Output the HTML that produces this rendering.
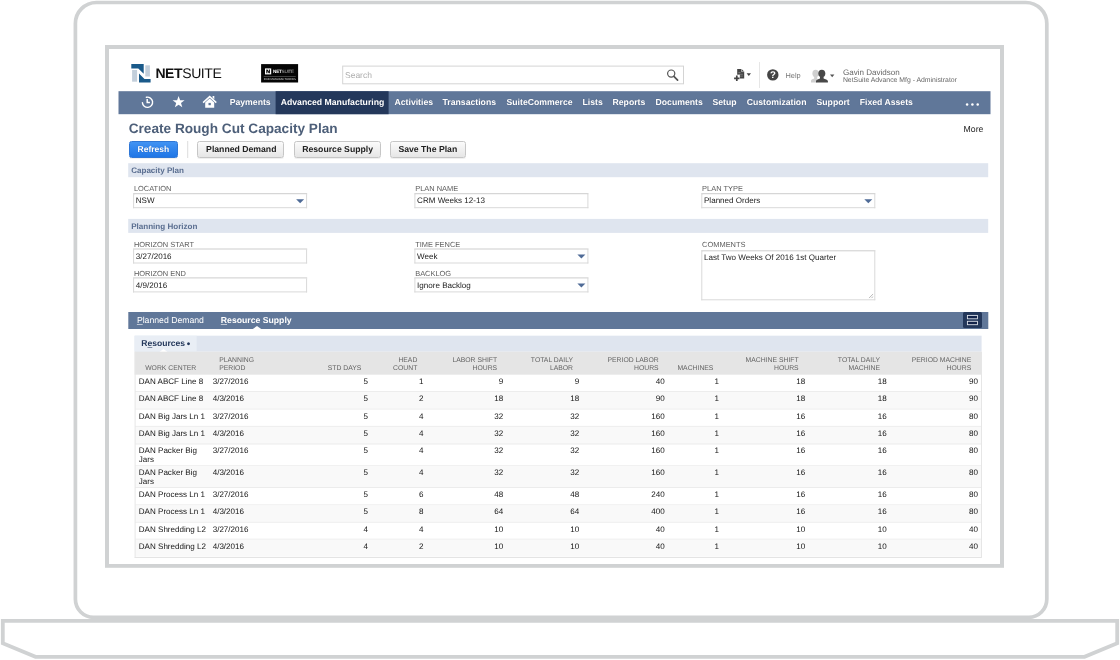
<!DOCTYPE html>
<html lang="en">
<head>
<meta charset="utf-8">
<title>Create Rough Cut Capacity Plan - NetSuite</title>
<style>
*{box-sizing:border-box;margin:0;padding:0}
html,body{width:1120px;height:660px;overflow:hidden;background:#fff}
body{position:relative;font-family:"Liberation Sans",Arial,sans-serif;color:#222;-webkit-font-smoothing:antialiased;text-rendering:geometricPrecision}
.a{position:absolute;white-space:nowrap}
#frame{position:absolute;left:0;top:0;width:1120px;height:660px}
#screen{position:absolute;left:109px;top:49px;width:891px;height:515px;background:#fff;overflow:hidden}
#s{position:absolute;left:-109px;top:-49px;width:1120px;height:660px;will-change:transform}
.btn{top:141px;height:17px;border:1px solid #c6c6c6;border-radius:2.5px;background:linear-gradient(#fbfbfb,#e6e6e6);box-shadow:0 1px 0 rgba(0,0,0,.06)}
.bp{background:linear-gradient(#4193f3,#1f76e6);border-color:#2f77d6}
.fd{border:1px solid #d9d9d9;border-top-color:#cdcdcd;background:#fff}
.arr{position:absolute;right:2.8px;top:4.9px;width:0;height:0;border-left:4.1px solid transparent;border-right:4.1px solid transparent;border-top:4.8px solid #4f6b97}
u{text-decoration-thickness:1px;text-underline-offset:1px;text-decoration-color:rgba(255,255,255,.6)}
u.d{text-decoration-color:rgba(36,56,91,.55)}
</style>
</head>
<body>
<svg id="frame" viewBox="0 0 1120 660">
  <path d="M96.4 2.5 H1025.8 A21 21 0 0 1 1046.8 23.5 V599.3 A18 18 0 0 1 1028.8 617.3 H93.4 A18 18 0 0 1 75.4 599.3 V23.5 A21 21 0 0 1 96.4 2.5 Z" fill="#fff" stroke="#d0d2d3" stroke-width="3.7"/>
  <path d="M2.8 620.9 H1117.2 V643.3 L1084.5 656.8 H35.5 L2.8 643.3 Z" fill="#fff" stroke="#d0d2d3" stroke-width="3.8" stroke-linejoin="miter"/>
  <rect x="107" y="47" width="895" height="518.8" fill="none" stroke="#d0d2d3" stroke-width="4"/>
</svg>
<div id="screen"><div id="s">
<!-- CONTENT -->
<!-- ===== header ===== -->
<svg class="a" style="left:0;top:0" width="1120" height="120" viewBox="0 0 1120 120">
  <!-- netsuite mark -->
  <polygon points="131.3,64.1 143.7,64.1 143.7,73.8 138.3,68.5 131.3,68.5" fill="#1a5a8a"/>
  <polygon points="139,73.4 144.5,78.9 150.6,78.9 150.6,82.6 139,82.6" fill="#1a5a8a"/>
  <rect x="132.1" y="70" width="5" height="11.7" fill="#c3cfdb"/>
  <rect x="145.3" y="65.3" width="4.6" height="11.2" fill="#c3cfdb"/>
  <!-- black partner badge -->
  <rect x="261.1" y="64.1" width="37" height="18.4" fill="#050505"/>
  <rect x="265" y="68.4" width="6.2" height="6" fill="#fff"/>
  <path d="M266.3 69.6v3.6h1.1v-2.2l1.3 2.2h1.2v-3.6h-1.1v2.1l-1.3-2.1z" fill="#050505"/>
  <rect x="263.7" y="76.1" width="32" height="0.4" fill="#999"/>
  <!-- search box -->
  <rect x="342.7" y="66.1" width="340.8" height="17.7" fill="#fff" stroke="#d4d4d4" stroke-width="1"/>
  <circle cx="671.2" cy="73.6" r="3.6" fill="none" stroke="#555" stroke-width="1.2"/>
  <path d="M673.9 76.4 L677.6 80.1" stroke="#555" stroke-width="1.7" stroke-linecap="round"/>
  <!-- create new -->
  <path d="M737.2 69h4.3l2.7 2.6v7h-7z" fill="#444"/>
  <path d="M741.5 69v2.6h2.7" fill="none" stroke="#fff" stroke-width="0.5"/>
  <path d="M738.4 72.5h2.2M738.4 74.3h4.4M738.4 76.1h4.4" stroke="#999" stroke-width="0.6"/>
  <rect x="733.4" y="74.7" width="6.4" height="6.8" fill="#fff"/>
  <path d="M736.8 75.6v5.4M734.1 78.3h5.4" stroke="#444" stroke-width="1.7"/>
  <path d="M746.6 73.2h4.4l-2.2 2.8z" fill="#444"/>
  <rect x="759" y="62" width="1" height="26" fill="#e6e6e6"/>
  <!-- help -->
  <circle cx="772.8" cy="74.9" r="5.7" fill="#444"/>
  <!-- user -->
  <ellipse cx="815.6" cy="73.5" rx="3.2" ry="3.7" fill="#cfcfcf"/>
  <path d="M811 82.4v-1.6c0-1.2 1.8-1.7 3.2-2.2v-1.6h3v5.4z" fill="#cfcfcf"/>
  <ellipse cx="821.8" cy="73.5" rx="3.5" ry="3.8" fill="#484848"/>
  <path d="M816 82.4v-1.5c0-1.3 2.6-1.9 4-2.5v-2h3.6v2c1.4.6 4.3 1.2 4.3 2.5v1.5z" fill="#484848"/>
  <path d="M830 74.4h4.4l-2.2 2.8z" fill="#555"/>
</svg>

<div class="a" style="left:155.4px;top:65px;font-size:14px;line-height:16px;color:#111;letter-spacing:-0.4px;"><b>NET</b>SUITE</div>
<div class="a" style="left:273.1px;top:69px;font-size:4.6px;line-height:6px;color:#fff;letter-spacing:-0.24px;"><b>NET</b><span style="color:#bbb">SUITE</span></div>
<div class="a" style="left:263.8px;top:77px;font-size:2.83px;line-height:4px;color:#ddd;">FOR MANUFACTURERS</div>
<div class="a" style="left:345px;top:70px;font-size:8.5px;line-height:11px;color:#adadad;">Search</div>
<div class="a" style="left:770.1px;top:70px;font-size:9.6px;line-height:11px;font-weight:bold;color:#fff;">?</div>
<div class="a" style="left:785.5px;top:71px;font-size:7.4px;line-height:9px;color:#777;">Help</div>
<div class="a" style="left:842.9px;top:68px;font-size:8.06px;line-height:10px;color:#666;">Gavin Davidson</div>
<div class="a" style="left:842.9px;top:77px;font-size:6.86px;line-height:8px;color:#666;">NetSuite Advance Mfg - Administrator</div>
<!-- ===== nav ===== -->
<div class="a" style="left:118px;top:91px;width:872.3px;height:22.8px;background:#607799;transform:translate(0.5px,0.2px);"></div>
<div class="a" style="left:275px;top:91px;width:113.4px;height:22.8px;background:#24385b;transform:translate(0.6px,0.2px);"></div>
<svg class="a" style="left:118px;top:91px" width="110" height="24" viewBox="118 91 110 24">
  <path d="M146.4 97.3A5.1 5.1 0 1 1 142.4 102.6" fill="none" stroke="#fff" stroke-width="1.4" stroke-linecap="round"/>
  <path d="M147.2 98.9v3.7h2.7" fill="none" stroke="#fff" stroke-width="1.5"/>
  <polygon fill="#fff" points="178.6,96 180.1,100.2 184.6,100.3 181,103 182.3,107.3 178.6,104.8 174.9,107.3 176.2,103 172.6,100.3 177.1,100.2"/>
  <path d="M203.1 102.6 209.7 96.6 216.3 102.6" fill="none" stroke="#fff" stroke-width="1.5"/>
  <path d="M212.6 96.1h1.7v3.2l-1.7-1.5z" fill="#fff"/>
  <path d="M205.2 102.6l4.5-4.1 4.5 4.1v5.2h-9z" fill="#fff"/>
  <rect x="208.5" y="102.9" width="2.3" height="2.3" fill="#607799"/>
</svg>
<div class="a" style="left:229.7px;top:96px;font-size:8.68px;line-height:12px;font-weight:bold;color:#fff;text-shadow:0 0 1px rgba(20,30,60,.35);">Payments</div>
<div class="a" style="left:280.7px;top:96px;font-size:8.68px;line-height:12px;font-weight:bold;color:#fff;text-shadow:0 0 1px rgba(20,30,60,.35);">Advanced Manufacturing</div>
<div class="a" style="left:394.5px;top:96px;font-size:8.68px;line-height:12px;font-weight:bold;color:#fff;text-shadow:0 0 1px rgba(20,30,60,.35);">Activities</div>
<div class="a" style="left:442.5px;top:96px;font-size:8.68px;line-height:12px;font-weight:bold;color:#fff;text-shadow:0 0 1px rgba(20,30,60,.35);">Transactions</div>
<div class="a" style="left:506.5px;top:96px;font-size:8.68px;line-height:12px;font-weight:bold;color:#fff;text-shadow:0 0 1px rgba(20,30,60,.35);">SuiteCommerce</div>
<div class="a" style="left:582.5px;top:96px;font-size:8.68px;line-height:12px;font-weight:bold;color:#fff;text-shadow:0 0 1px rgba(20,30,60,.35);">Lists</div>
<div class="a" style="left:612.5px;top:96px;font-size:8.68px;line-height:12px;font-weight:bold;color:#fff;text-shadow:0 0 1px rgba(20,30,60,.35);">Reports</div>
<div class="a" style="left:655.5px;top:96px;font-size:8.68px;line-height:12px;font-weight:bold;color:#fff;text-shadow:0 0 1px rgba(20,30,60,.35);">Documents</div>
<div class="a" style="left:712.5px;top:96px;font-size:8.68px;line-height:12px;font-weight:bold;color:#fff;text-shadow:0 0 1px rgba(20,30,60,.35);">Setup</div>
<div class="a" style="left:746.7px;top:96px;font-size:8.68px;line-height:12px;font-weight:bold;color:#fff;text-shadow:0 0 1px rgba(20,30,60,.35);">Customization</div>
<div class="a" style="left:816.5px;top:96px;font-size:8.68px;line-height:12px;font-weight:bold;color:#fff;text-shadow:0 0 1px rgba(20,30,60,.35);">Support</div>
<div class="a" style="left:859.7px;top:96px;font-size:8.68px;line-height:12px;font-weight:bold;color:#fff;text-shadow:0 0 1px rgba(20,30,60,.35);">Fixed Assets</div>
<svg class="a" style="left:964px;top:100px" width="18" height="8" viewBox="0 0 18 8"><circle cx="3.1" cy="4.5" r="1.25" fill="#fff"/><circle cx="8.4" cy="4.5" r="1.25" fill="#fff"/><circle cx="13.7" cy="4.5" r="1.25" fill="#fff"/></svg>
<!-- ===== title + buttons ===== -->
<div class="a" style="left:128.7px;top:120px;font-size:13.63px;line-height:17px;font-weight:bold;color:#4d5f79;">Create Rough Cut Capacity Plan</div>
<div class="a" style="left:963.6px;top:124px;font-size:8.7px;line-height:11px;color:#222;">More</div>
<div class="a btn bp" style="left:129px;width:48.5px"></div>
<div class="a" style="left:137.6px;top:144px;font-size:8.5px;line-height:11px;font-weight:bold;color:#fff;text-shadow:0 0 1px rgba(0,40,120,.5);">Refresh</div>
<div class="a" style="left:187px;top:141px;width:1px;height:17px;background:#dcdcdc;transform:translate(0.2px,0px);"></div>
<div class="a btn" style="left:197.4px;width:86.8px"></div>
<div class="a" style="left:206.1px;top:144px;font-size:8.68px;line-height:11px;font-weight:bold;color:#222;">Planned Demand</div>
<div class="a btn" style="left:293.5px;width:87.5px"></div>
<div class="a" style="left:302.2px;top:144px;font-size:8.68px;line-height:11px;font-weight:bold;color:#222;">Resource Supply</div>
<div class="a btn" style="left:390px;width:75.5px"></div>
<div class="a" style="left:398.4px;top:144px;font-size:8.68px;line-height:11px;font-weight:bold;color:#222;">Save The Plan</div>
<!-- ===== capacity plan ===== -->
<div class="a" style="left:128px;top:163px;width:859.8px;height:13.8px;background:#dfe5ef;transform:translate(0.2px,0.2px);"></div>
<div class="a" style="left:131.2px;top:166px;font-size:8.06px;line-height:10px;font-weight:bold;color:#5a6e90;">Capacity Plan</div>
<div class="a" style="left:133.9px;top:184px;font-size:7.44px;line-height:9px;color:#5c5c5c;">LOCATION</div>
<div class="a fd" style="left:133px;top:193px;width:174.4px;height:14.8px;transform:translate(0.1px,0.2px);"><i class="arr"></i></div>
<div class="a" style="left:135.8px;top:196px;font-size:8.06px;line-height:10px;color:#1a1a1a;">NSW</div>
<div class="a" style="left:415.2px;top:184px;font-size:7.44px;line-height:9px;color:#5c5c5c;">PLAN NAME</div>
<div class="a fd" style="left:414px;top:193px;width:174.4px;height:14.8px;transform:translate(0.4px,0.2px);"></div>
<div class="a" style="left:417.1px;top:196px;font-size:8.06px;line-height:10px;color:#1a1a1a;">CRM Weeks 12-13</div>
<div class="a" style="left:702.1px;top:184px;font-size:7.44px;line-height:9px;color:#5c5c5c;">PLAN TYPE</div>
<div class="a fd" style="left:701px;top:193px;width:174.4px;height:14.8px;transform:translate(0.3px,0.2px);"><i class="arr"></i></div>
<div class="a" style="left:704px;top:196px;font-size:8.06px;line-height:10px;color:#1a1a1a;">Planned Orders</div>
<!-- ===== planning horizon ===== -->
<div class="a" style="left:128px;top:218px;width:859.8px;height:13.8px;background:#dfe5ef;transform:translate(0.2px,0.9px);"></div>
<div class="a" style="left:131.2px;top:222px;font-size:8.06px;line-height:10px;font-weight:bold;color:#5a6e90;">Planning Horizon</div>
<div class="a" style="left:133.9px;top:240px;font-size:7.44px;line-height:9px;color:#5c5c5c;">HORIZON START</div>
<div class="a fd" style="left:133px;top:248px;width:174.4px;height:15.1px;transform:translate(0.1px,0.5px);"></div>
<div class="a" style="left:135.8px;top:252px;font-size:8.06px;line-height:10px;color:#1a1a1a;">3/27/2016</div>
<div class="a" style="left:133.9px;top:269px;font-size:7.44px;line-height:9px;color:#5c5c5c;">HORIZON END</div>
<div class="a fd" style="left:133px;top:277px;width:174.4px;height:15.2px;transform:translate(0.1px,0.4px);"></div>
<div class="a" style="left:135.8px;top:281px;font-size:8.06px;line-height:10px;color:#1a1a1a;">4/9/2016</div>
<div class="a" style="left:415.2px;top:240px;font-size:7.44px;line-height:9px;color:#5c5c5c;">TIME FENCE</div>
<div class="a fd" style="left:414px;top:248px;width:174.4px;height:15.1px;transform:translate(0.4px,0.5px);"><i class="arr"></i></div>
<div class="a" style="left:417.1px;top:252px;font-size:8.06px;line-height:10px;color:#1a1a1a;">Week</div>
<div class="a" style="left:415.2px;top:269px;font-size:7.44px;line-height:9px;color:#5c5c5c;">BACKLOG</div>
<div class="a fd" style="left:414px;top:277px;width:174.4px;height:15.2px;transform:translate(0.4px,0.4px);"><i class="arr"></i></div>
<div class="a" style="left:417.1px;top:281px;font-size:8.06px;line-height:10px;color:#1a1a1a;">Ignore Backlog</div>
<div class="a" style="left:702.1px;top:240px;font-size:7.44px;line-height:9px;color:#5c5c5c;">COMMENTS</div>
<div class="a fd" style="left:701px;top:250px;width:174.4px;height:50.3px;transform:translate(0.3px,0.3px);"><svg style="position:absolute;right:1px;bottom:1px" width="5" height="5" viewBox="0 0 5 5"><path d="M0.5 5 5 0.5M3 5 5 3" stroke="#888" stroke-width="0.6"/></svg></div>
<div class="a" style="left:704px;top:253px;font-size:8.06px;line-height:10px;color:#1a1a1a;">Last Two Weeks Of 2016 1st Quarter</div>
<!-- ===== tabs ===== -->
<div class="a" style="left:128px;top:312px;width:859.7px;height:16.8px;background:#607799;transform:translate(0.3px,0px);"></div>
<div class="a" style="left:136.9px;top:315px;font-size:8.68px;line-height:11px;color:#fff;"><u>P</u>lanned Demand</div>
<div class="a" style="left:220.8px;top:315px;font-size:8.68px;line-height:11px;font-weight:bold;color:#fff;"><u>R</u>esource Supply</div>
<svg class="a" style="left:252px;top:325px" width="10" height="4" viewBox="252 325 10 4"><path d="M252.8 328.9 257 326 261.2 328.9z" fill="#fff"/></svg>
<div class="a" style="left:963px;top:312px;width:19px;height:16.4px;background:#24385b;transform:translate(0px,0.1px);border-radius:1.5px;"></div>
<svg class="a" style="left:963px;top:312px" width="20" height="17" viewBox="963 312 20 17"><rect x="967.4" y="315.4" width="10.1" height="3.4" fill="#14244a" stroke="#e3e7ee" stroke-width="0.85"/><rect x="967.4" y="321.3" width="10.1" height="3.4" fill="#14244a" stroke="#e3e7ee" stroke-width="0.85"/></svg>
<!-- ===== sublist ===== -->
<div class="a" style="left:134px;top:335px;width:847.1px;height:16px;background:#dfe5ef;transform:translate(0.6px,0.7px);"></div>
<div class="a" style="left:134px;top:335px;width:61.7px;height:16px;background:#e9eef5;transform:translate(0.6px,0.7px);"></div>
<div class="a" style="left:141.3px;top:338px;font-size:8.55px;line-height:11px;font-weight:bold;color:#24385b;">R<u class="d">e</u>sources</div>
<div class="a" style="left:186.8px;top:339px;font-size:10px;line-height:11px;font-weight:bold;color:#24385b;">&bull;</div>
<svg class="a" style="left:158px;top:348px" width="12" height="5" viewBox="158 348 12 5"><path d="M159 352.3 163.5 349.1 168 352.3z" fill="#fff"/></svg>
<div class="a" style="left:134px;top:351px;width:847.1px;height:23.1px;background:#e5e5e5;transform:translate(0.6px,0.7px);"></div>
<div class="a" style="left:145.2px;top:365px;font-size:6.82px;line-height:8px;color:#646464;">WORK CENTER</div>
<div class="a" style="left:219.2px;top:357px;font-size:6.82px;line-height:8px;color:#646464;">PLANNING</div>
<div class="a" style="left:219.2px;top:365px;font-size:6.82px;line-height:8px;color:#646464;">PERIOD</div>
<div class="a" style="right:758.6px;top:365px;font-size:6.82px;line-height:8px;color:#646464;">STD DAYS</div>
<div class="a" style="right:702.7px;top:357px;font-size:6.82px;line-height:8px;color:#646464;">HEAD</div>
<div class="a" style="right:702.7px;top:365px;font-size:6.82px;line-height:8px;color:#646464;">COUNT</div>
<div class="a" style="right:622.9px;top:357px;font-size:6.82px;line-height:8px;color:#646464;">LABOR SHIFT</div>
<div class="a" style="right:622.9px;top:365px;font-size:6.82px;line-height:8px;color:#646464;">HOURS</div>
<div class="a" style="right:547px;top:357px;font-size:6.82px;line-height:8px;color:#646464;">TOTAL DAILY</div>
<div class="a" style="right:547px;top:365px;font-size:6.82px;line-height:8px;color:#646464;">LABOR</div>
<div class="a" style="right:461.4px;top:357px;font-size:6.82px;line-height:8px;color:#646464;">PERIOD LABOR</div>
<div class="a" style="right:461.4px;top:365px;font-size:6.82px;line-height:8px;color:#646464;">HOURS</div>
<div class="a" style="right:406.6px;top:365px;font-size:6.82px;line-height:8px;color:#646464;">MACHINES</div>
<div class="a" style="right:321.4px;top:357px;font-size:6.82px;line-height:8px;color:#646464;">MACHINE SHIFT</div>
<div class="a" style="right:321.4px;top:365px;font-size:6.82px;line-height:8px;color:#646464;">HOURS</div>
<div class="a" style="right:240px;top:357px;font-size:6.82px;line-height:8px;color:#646464;">TOTAL DAILY</div>
<div class="a" style="right:240px;top:365px;font-size:6.82px;line-height:8px;color:#646464;">MACHINE</div>
<div class="a" style="right:148.8px;top:357px;font-size:6.82px;line-height:8px;color:#646464;">PERIOD MACHINE</div>
<div class="a" style="right:148.8px;top:365px;font-size:6.82px;line-height:8px;color:#646464;">HOURS</div>
<div class="a" style="left:138.8px;top:377px;font-size:8.06px;line-height:10px;color:#151515;">DAN ABCF Line 8</div>
<div class="a" style="left:212.7px;top:377px;font-size:8.06px;line-height:10px;color:#151515;">3/27/2016</div>
<div class="a" style="right:752px;top:377px;font-size:8.06px;line-height:10px;color:#151515;">5</div>
<div class="a" style="right:696.6px;top:377px;font-size:8.06px;line-height:10px;color:#151515;">1</div>
<div class="a" style="right:616.8px;top:377px;font-size:8.06px;line-height:10px;color:#151515;">9</div>
<div class="a" style="right:540.9px;top:377px;font-size:8.06px;line-height:10px;color:#151515;">9</div>
<div class="a" style="right:455.3px;top:377px;font-size:8.06px;line-height:10px;color:#151515;">40</div>
<div class="a" style="right:401.1px;top:377px;font-size:8.06px;line-height:10px;color:#151515;">1</div>
<div class="a" style="right:314.8px;top:377px;font-size:8.06px;line-height:10px;color:#151515;">18</div>
<div class="a" style="right:233.4px;top:377px;font-size:8.06px;line-height:10px;color:#151515;">18</div>
<div class="a" style="right:142.1px;top:377px;font-size:8.06px;line-height:10px;color:#151515;">90</div>
<div class="a" style="left:135px;top:391px;width:846.1px;height:1px;background:#ececec;transform:translate(0.1px,0.1px);"></div>
<div class="a" style="left:135px;top:392px;width:846.1px;height:16.4px;background:#f9f9f9;transform:translate(0.1px,0.1px);"></div>
<div class="a" style="left:138.8px;top:394px;font-size:8.06px;line-height:10px;color:#151515;">DAN ABCF Line 8</div>
<div class="a" style="left:212.7px;top:394px;font-size:8.06px;line-height:10px;color:#151515;">4/3/2016</div>
<div class="a" style="right:752px;top:394px;font-size:8.06px;line-height:10px;color:#151515;">5</div>
<div class="a" style="right:696.6px;top:394px;font-size:8.06px;line-height:10px;color:#151515;">2</div>
<div class="a" style="right:616.8px;top:394px;font-size:8.06px;line-height:10px;color:#151515;">18</div>
<div class="a" style="right:540.9px;top:394px;font-size:8.06px;line-height:10px;color:#151515;">18</div>
<div class="a" style="right:455.3px;top:394px;font-size:8.06px;line-height:10px;color:#151515;">90</div>
<div class="a" style="right:401.1px;top:394px;font-size:8.06px;line-height:10px;color:#151515;">1</div>
<div class="a" style="right:314.8px;top:394px;font-size:8.06px;line-height:10px;color:#151515;">18</div>
<div class="a" style="right:233.4px;top:394px;font-size:8.06px;line-height:10px;color:#151515;">18</div>
<div class="a" style="right:142.1px;top:394px;font-size:8.06px;line-height:10px;color:#151515;">90</div>
<div class="a" style="left:135px;top:408px;width:846.1px;height:1px;background:#ececec;transform:translate(0.1px,0.5px);"></div>
<div class="a" style="left:138.8px;top:412px;font-size:8.06px;line-height:10px;color:#151515;">DAN Big Jars Ln 1</div>
<div class="a" style="left:212.7px;top:412px;font-size:8.06px;line-height:10px;color:#151515;">3/27/2016</div>
<div class="a" style="right:752px;top:412px;font-size:8.06px;line-height:10px;color:#151515;">5</div>
<div class="a" style="right:696.6px;top:412px;font-size:8.06px;line-height:10px;color:#151515;">4</div>
<div class="a" style="right:616.8px;top:412px;font-size:8.06px;line-height:10px;color:#151515;">32</div>
<div class="a" style="right:540.9px;top:412px;font-size:8.06px;line-height:10px;color:#151515;">32</div>
<div class="a" style="right:455.3px;top:412px;font-size:8.06px;line-height:10px;color:#151515;">160</div>
<div class="a" style="right:401.1px;top:412px;font-size:8.06px;line-height:10px;color:#151515;">1</div>
<div class="a" style="right:314.8px;top:412px;font-size:8.06px;line-height:10px;color:#151515;">16</div>
<div class="a" style="right:233.4px;top:412px;font-size:8.06px;line-height:10px;color:#151515;">16</div>
<div class="a" style="right:142.1px;top:412px;font-size:8.06px;line-height:10px;color:#151515;">80</div>
<div class="a" style="left:135px;top:425px;width:846.1px;height:1px;background:#ececec;transform:translate(0.1px,0.9px);"></div>
<div class="a" style="left:135px;top:426px;width:846.1px;height:16.6px;background:#f9f9f9;transform:translate(0.1px,0.9px);"></div>
<div class="a" style="left:138.8px;top:429px;font-size:8.06px;line-height:10px;color:#151515;">DAN Big Jars Ln 1</div>
<div class="a" style="left:212.7px;top:429px;font-size:8.06px;line-height:10px;color:#151515;">4/3/2016</div>
<div class="a" style="right:752px;top:429px;font-size:8.06px;line-height:10px;color:#151515;">5</div>
<div class="a" style="right:696.6px;top:429px;font-size:8.06px;line-height:10px;color:#151515;">4</div>
<div class="a" style="right:616.8px;top:429px;font-size:8.06px;line-height:10px;color:#151515;">32</div>
<div class="a" style="right:540.9px;top:429px;font-size:8.06px;line-height:10px;color:#151515;">32</div>
<div class="a" style="right:455.3px;top:429px;font-size:8.06px;line-height:10px;color:#151515;">160</div>
<div class="a" style="right:401.1px;top:429px;font-size:8.06px;line-height:10px;color:#151515;">1</div>
<div class="a" style="right:314.8px;top:429px;font-size:8.06px;line-height:10px;color:#151515;">16</div>
<div class="a" style="right:233.4px;top:429px;font-size:8.06px;line-height:10px;color:#151515;">16</div>
<div class="a" style="right:142.1px;top:429px;font-size:8.06px;line-height:10px;color:#151515;">80</div>
<div class="a" style="left:135px;top:443px;width:846.1px;height:1px;background:#ececec;transform:translate(0.1px,0.5px);"></div>
<div class="a" style="left:138.8px;top:446px;font-size:8.06px;line-height:10px;color:#151515;">DAN Packer Big</div>
<div class="a" style="left:138.8px;top:455px;font-size:8.06px;line-height:10px;color:#151515;">Jars</div>
<div class="a" style="left:212.7px;top:446px;font-size:8.06px;line-height:10px;color:#151515;">3/27/2016</div>
<div class="a" style="right:752px;top:446px;font-size:8.06px;line-height:10px;color:#151515;">5</div>
<div class="a" style="right:696.6px;top:446px;font-size:8.06px;line-height:10px;color:#151515;">4</div>
<div class="a" style="right:616.8px;top:446px;font-size:8.06px;line-height:10px;color:#151515;">32</div>
<div class="a" style="right:540.9px;top:446px;font-size:8.06px;line-height:10px;color:#151515;">32</div>
<div class="a" style="right:455.3px;top:446px;font-size:8.06px;line-height:10px;color:#151515;">160</div>
<div class="a" style="right:401.1px;top:446px;font-size:8.06px;line-height:10px;color:#151515;">1</div>
<div class="a" style="right:314.8px;top:446px;font-size:8.06px;line-height:10px;color:#151515;">16</div>
<div class="a" style="right:233.4px;top:446px;font-size:8.06px;line-height:10px;color:#151515;">16</div>
<div class="a" style="right:142.1px;top:446px;font-size:8.06px;line-height:10px;color:#151515;">80</div>
<div class="a" style="left:135px;top:465px;width:846.1px;height:1px;background:#ececec;transform:translate(0.1px,0.3px);"></div>
<div class="a" style="left:135px;top:466px;width:846.1px;height:20.7px;background:#f9f9f9;transform:translate(0.1px,0.3px);"></div>
<div class="a" style="left:138.8px;top:468px;font-size:8.06px;line-height:10px;color:#151515;">DAN Packer Big</div>
<div class="a" style="left:138.8px;top:477px;font-size:8.06px;line-height:10px;color:#151515;">Jars</div>
<div class="a" style="left:212.7px;top:468px;font-size:8.06px;line-height:10px;color:#151515;">4/3/2016</div>
<div class="a" style="right:752px;top:468px;font-size:8.06px;line-height:10px;color:#151515;">5</div>
<div class="a" style="right:696.6px;top:468px;font-size:8.06px;line-height:10px;color:#151515;">4</div>
<div class="a" style="right:616.8px;top:468px;font-size:8.06px;line-height:10px;color:#151515;">32</div>
<div class="a" style="right:540.9px;top:468px;font-size:8.06px;line-height:10px;color:#151515;">32</div>
<div class="a" style="right:455.3px;top:468px;font-size:8.06px;line-height:10px;color:#151515;">160</div>
<div class="a" style="right:401.1px;top:468px;font-size:8.06px;line-height:10px;color:#151515;">1</div>
<div class="a" style="right:314.8px;top:468px;font-size:8.06px;line-height:10px;color:#151515;">16</div>
<div class="a" style="right:233.4px;top:468px;font-size:8.06px;line-height:10px;color:#151515;">16</div>
<div class="a" style="right:142.1px;top:468px;font-size:8.06px;line-height:10px;color:#151515;">80</div>
<div class="a" style="left:135px;top:487px;width:846.1px;height:1px;background:#ececec;transform:translate(0.1px,0px);"></div>
<div class="a" style="left:138.8px;top:490px;font-size:8.06px;line-height:10px;color:#151515;">DAN Process Ln 1</div>
<div class="a" style="left:212.7px;top:490px;font-size:8.06px;line-height:10px;color:#151515;">3/27/2016</div>
<div class="a" style="right:752px;top:490px;font-size:8.06px;line-height:10px;color:#151515;">5</div>
<div class="a" style="right:696.6px;top:490px;font-size:8.06px;line-height:10px;color:#151515;">6</div>
<div class="a" style="right:616.8px;top:490px;font-size:8.06px;line-height:10px;color:#151515;">48</div>
<div class="a" style="right:540.9px;top:490px;font-size:8.06px;line-height:10px;color:#151515;">48</div>
<div class="a" style="right:455.3px;top:490px;font-size:8.06px;line-height:10px;color:#151515;">240</div>
<div class="a" style="right:401.1px;top:490px;font-size:8.06px;line-height:10px;color:#151515;">1</div>
<div class="a" style="right:314.8px;top:490px;font-size:8.06px;line-height:10px;color:#151515;">16</div>
<div class="a" style="right:233.4px;top:490px;font-size:8.06px;line-height:10px;color:#151515;">16</div>
<div class="a" style="right:142.1px;top:490px;font-size:8.06px;line-height:10px;color:#151515;">80</div>
<div class="a" style="left:135px;top:504px;width:846.1px;height:1px;background:#ececec;transform:translate(0.1px,0.4px);"></div>
<div class="a" style="left:135px;top:505px;width:846.1px;height:16.3px;background:#f9f9f9;transform:translate(0.1px,0.4px);"></div>
<div class="a" style="left:138.8px;top:507px;font-size:8.06px;line-height:10px;color:#151515;">DAN Process Ln 1</div>
<div class="a" style="left:212.7px;top:507px;font-size:8.06px;line-height:10px;color:#151515;">4/3/2016</div>
<div class="a" style="right:752px;top:507px;font-size:8.06px;line-height:10px;color:#151515;">5</div>
<div class="a" style="right:696.6px;top:507px;font-size:8.06px;line-height:10px;color:#151515;">8</div>
<div class="a" style="right:616.8px;top:507px;font-size:8.06px;line-height:10px;color:#151515;">64</div>
<div class="a" style="right:540.9px;top:507px;font-size:8.06px;line-height:10px;color:#151515;">64</div>
<div class="a" style="right:455.3px;top:507px;font-size:8.06px;line-height:10px;color:#151515;">400</div>
<div class="a" style="right:401.1px;top:507px;font-size:8.06px;line-height:10px;color:#151515;">1</div>
<div class="a" style="right:314.8px;top:507px;font-size:8.06px;line-height:10px;color:#151515;">16</div>
<div class="a" style="right:233.4px;top:507px;font-size:8.06px;line-height:10px;color:#151515;">16</div>
<div class="a" style="right:142.1px;top:507px;font-size:8.06px;line-height:10px;color:#151515;">80</div>
<div class="a" style="left:135px;top:521px;width:846.1px;height:1px;background:#ececec;transform:translate(0.1px,0.7px);"></div>
<div class="a" style="left:138.8px;top:525px;font-size:8.06px;line-height:10px;color:#151515;">DAN Shredding L2</div>
<div class="a" style="left:212.7px;top:525px;font-size:8.06px;line-height:10px;color:#151515;">3/27/2016</div>
<div class="a" style="right:752px;top:525px;font-size:8.06px;line-height:10px;color:#151515;">4</div>
<div class="a" style="right:696.6px;top:525px;font-size:8.06px;line-height:10px;color:#151515;">4</div>
<div class="a" style="right:616.8px;top:525px;font-size:8.06px;line-height:10px;color:#151515;">10</div>
<div class="a" style="right:540.9px;top:525px;font-size:8.06px;line-height:10px;color:#151515;">10</div>
<div class="a" style="right:455.3px;top:525px;font-size:8.06px;line-height:10px;color:#151515;">40</div>
<div class="a" style="right:401.1px;top:525px;font-size:8.06px;line-height:10px;color:#151515;">1</div>
<div class="a" style="right:314.8px;top:525px;font-size:8.06px;line-height:10px;color:#151515;">10</div>
<div class="a" style="right:233.4px;top:525px;font-size:8.06px;line-height:10px;color:#151515;">10</div>
<div class="a" style="right:142.1px;top:525px;font-size:8.06px;line-height:10px;color:#151515;">40</div>
<div class="a" style="left:135px;top:538px;width:846.1px;height:1px;background:#ececec;transform:translate(0.1px,0.7px);"></div>
<div class="a" style="left:135px;top:539px;width:846.1px;height:17.1px;background:#f9f9f9;transform:translate(0.1px,0.7px);"></div>
<div class="a" style="left:138.8px;top:542px;font-size:8.06px;line-height:10px;color:#151515;">DAN Shredding L2</div>
<div class="a" style="left:212.7px;top:542px;font-size:8.06px;line-height:10px;color:#151515;">4/3/2016</div>
<div class="a" style="right:752px;top:542px;font-size:8.06px;line-height:10px;color:#151515;">4</div>
<div class="a" style="right:696.6px;top:542px;font-size:8.06px;line-height:10px;color:#151515;">2</div>
<div class="a" style="right:616.8px;top:542px;font-size:8.06px;line-height:10px;color:#151515;">10</div>
<div class="a" style="right:540.9px;top:542px;font-size:8.06px;line-height:10px;color:#151515;">10</div>
<div class="a" style="right:455.3px;top:542px;font-size:8.06px;line-height:10px;color:#151515;">40</div>
<div class="a" style="right:401.1px;top:542px;font-size:8.06px;line-height:10px;color:#151515;">1</div>
<div class="a" style="right:314.8px;top:542px;font-size:8.06px;line-height:10px;color:#151515;">10</div>
<div class="a" style="right:233.4px;top:542px;font-size:8.06px;line-height:10px;color:#151515;">10</div>
<div class="a" style="right:142.1px;top:542px;font-size:8.06px;line-height:10px;color:#151515;">40</div>
<div class="a" style="left:134px;top:351px;width:1px;height:206px;background:#e6e6e6;transform:translate(0.6px,0.7px);"></div>
<div class="a" style="left:981px;top:351px;width:1px;height:206px;background:#e6e6e6;transform:translate(0px,0.7px);"></div>
<div class="a" style="left:134px;top:557px;width:847.4px;height:1px;background:#e4e4e4;transform:translate(0.6px,0px);"></div>
<!-- /CONTENT -->
</div></div>
</body>
</html>
